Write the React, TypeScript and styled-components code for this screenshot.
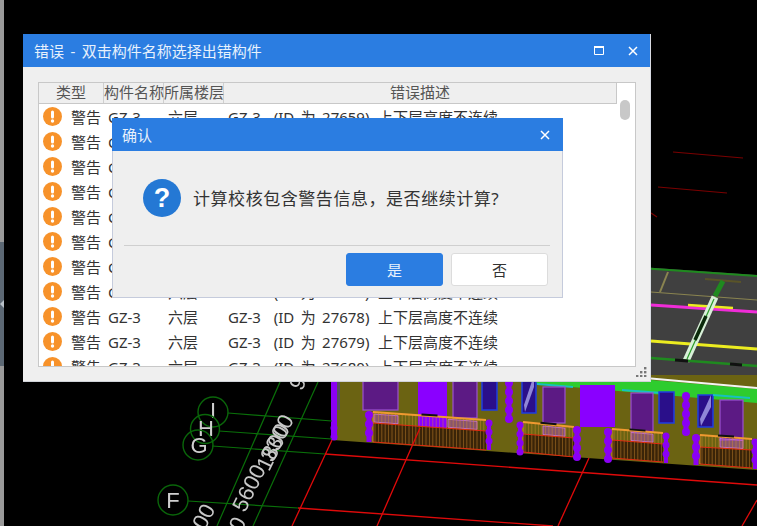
import React from "react";
import styled, { createGlobalStyle } from "styled-components";

const Global = createGlobalStyle`
  html, body { margin: 0; padding: 0; background: #000; }
  * { box-sizing: border-box; }
`;

const FONT = `"Noto Sans", "Noto Sans CJK SC", sans-serif`;
const BLUE = "#2b7de1";

const Desktop = styled.div`
  position: relative;
  width: 757px;
  height: 526px;
  overflow: hidden;
  background: #000;
  display: flex;
  font-family: ${FONT};
`;
const EdgeBar = styled.div`
  width: 4px;
  height: 100%;
  display: flex;
  flex-direction: column;
  background: #9a9a9a;
`;
const EdgeSpacer = styled.div<{ $h: number }>`
  height: ${(p) => p.$h}px;
`;
const EdgeHandle = styled.div`
  height: 124px;
  background: #5c6874;
  display: flex;
  align-items: center;
  justify-content: flex-start;
  color: #b8c0c8;
`;
const Scene = styled.svg`
  position: absolute;
  inset: 0;
  filter: blur(0.35px);
`;
const Window = styled.section`
  position: absolute;
  left: 23px;
  top: 34px;
  width: 628px;
  height: 348px;
  background: #efefef;
  border-right: 1px solid #d8dbe2;
  border-bottom: 1px solid #cfd2d8;
  display: flex;
  flex-direction: column;
`;
const TitleBar = styled.header`
  height: 33px;
  flex: none;
  background: ${BLUE};
  color: #e8f1fc;
  display: flex;
  align-items: center;
  font-size: 15px;
  word-spacing: 2.5px;
`;
const TitleText = styled.span`
  flex: 1;
  padding-left: 11px;
  white-space: nowrap;
`;
const WinButtons = styled.div`
  display: flex;
  align-items: center;
  gap: 24px;
  padding-right: 12px;
`;
const WindowBody = styled.div`
  flex: 1;
  padding: 15px 15px 14px 15px;
  position: relative;
`;
const Table = styled.div`
  width: 598px;
  height: 285px;
  border: 1px solid #c8c8c8;
  background: #fff;
  display: flex;
  overflow: hidden;
`;
const TableMain = styled.div`
  width: 578px;
  flex: none;
  display: flex;
  flex-direction: column;
`;
const Header = styled.div`
  display: flex;
  height: 21px;
  flex: none;
  background: #efefef;
  border-bottom: 1px solid #c8c8c8;
  border-right: 1px solid #c8c8c8;
  color: #555;
  font-size: 15px;
  line-height: 19px;
`;
const HeadCell = styled.div<{ $w: number }>`
  width: ${(p) => p.$w}px;
  flex: ${(p) => (p.$w ? "none" : 1)};
  text-align: center;
  white-space: nowrap;
  border-right: 1px solid #cfcfcf;
  &:last-child { border-right: 0; }
`;
const Rows = styled.div`
  flex: 1;
  overflow: hidden;
`;
const Row = styled.div`
  height: 25px;
  display: flex;
  align-items: center;
  color: #333;
  font-size: 15px;
  white-space: pre;
`;
const IconCell = styled.div`
  width: 32px;
  flex: none;
  padding-left: 4px;
  display: flex;
  align-items: center;
`;
const Cell = styled.div<{ $w: number }>`
  width: ${(p) => p.$w}px;
  flex: none;
`;
const IdCell = styled(Cell)`
  word-spacing: 2.5px;
`;
const ScrollTrack = styled.div`
  flex: 1;
  padding: 17px 4px 0 3px;
`;
const Thumb = styled.div`
  width: 10px;
  height: 20px;
  border-radius: 5px;
  background: #c8c8c8;
`;
const Grip = styled.svg`
  position: absolute;
  right: 3px;
  bottom: 4px;
`;
const Dialog = styled.section`
  position: absolute;
  left: 112px;
  top: 118px;
  width: 451px;
  height: 180px;
  background: #efefef;
  border: 1px solid #c5cbdc;
  border-top: 0;
  display: flex;
  flex-direction: column;
`;
const DialogTitle = styled(TitleBar)`
  margin: 0 -1px;
`;
const DialogTitleText = styled(TitleText)`
  padding-left: 10px;
`;
const DialogClose = styled.div`
  padding-right: 13px;
  display: flex;
`;
const Message = styled.div`
  height: 95px;
  flex: none;
  display: flex;
  align-items: center;
  gap: 12px;
  border-bottom: 1px solid #cfcfcf;
  margin: 0 12px 0 11px;
  padding-left: 19px;
`;
const Question = styled.div`
  width: 38px;
  height: 38px;
  border-radius: 50%;
  background: #2478d4;
  color: #fff;
  font: bold 27px/38px "Liberation Sans", sans-serif;
  text-align: center;
  flex: none;
`;
const MessageText = styled.span`
  font-size: 17px;
  letter-spacing: 0.55px;
  color: #333;
  white-space: nowrap;
  margin-top: -2px;
`;
const Actions = styled.div`
  flex: 1;
  display: flex;
  justify-content: flex-end;
  gap: 8px;
  padding: 7px 14px 0 0;
`;
const Btn = styled.button<{ $primary?: boolean }>`
  width: 97px;
  height: 33px;
  padding: 0;
  border-radius: 3px;
  font: 15px ${FONT};
  border: 1px solid ${(p) => (p.$primary ? BLUE : "#dcdcdc")};
  background: ${(p) => (p.$primary ? BLUE : "#fff")};
  color: ${(p) => (p.$primary ? "#e8f1fc" : "#333")};
`;

const CloseIcon = () => (
  <svg width="10" height="10" viewBox="0 0 10 10">
    <path d="M1 1l8 8M9 1l-8 8" stroke="#fff" strokeWidth="1.5" fill="none" />
  </svg>
);
const MaxIcon = () => (
  <svg width="10" height="9" viewBox="0 0 10 9">
    <path d="M.5 1h9v7.5h-9z" stroke="#fff" strokeWidth="1" fill="none" />
    <path d="M0 1h10" stroke="#fff" strokeWidth="2" />
  </svg>
);
const WarnIcon = () => (
  <svg width="19" height="19" viewBox="0 0 19 19">
    <circle cx="9.5" cy="9.5" r="9.5" fill="#f7922a" />
    <rect x="8" y="3.6" width="3" height="8" rx="1.5" fill="#fff" />
    <circle cx="9.5" cy="14" r="1.7" fill="#fff" />
  </svg>
);

const rows = [27659, 27660, 27661, 27662, 27663, 27664, 27665, 27677, 27678, 27679, 27680];

type P = [number, number];
const pts = (a: P[]) => a.map((p) => p.join(",")).join(" ");

const Blob = ({ x, y1, y2, w }: { x: number; y1: number; y2: number; w: number }) => {
  const cs: number[] = [];
  for (let y = y1 + 3; y < y2; y += 9) cs.push(y);
  return (
    <g fill="#8a00f5">
      <rect x={x - w / 2 + 1} y={y1} width={w - 2} height={y2 - y1} />
      {cs.map((y) => (
        <circle key={y} cx={x} cy={y} r={w / 2 + 0.5} />
      ))}
    </g>
  );
};

const Balcony = ({ x1, x2, t1, t2, m1, m2, b1, b2, pink }: { x1: number; x2: number; t1: number; t2: number; m1: number; m2: number; b1: number; b2: number; pink: [number, number][] }) => {
  const lerp = (a: number, b: number, x: number) => a + ((b - a) * (x - x1)) / (x2 - x1);
  const bars: number[] = [];
  for (let x = x1 + 2; x < x2; x += 3.4) bars.push(x);
  return (
    <g>
      <polygon points={pts([[x1, m1], [x2, m2], [x2, b2], [x1, b1]])} fill="#3a2408" />
      {pink.map(([a, b]) => (
        <polygon key={a} points={pts([[a, lerp(t1, t2, a) + 2], [b, lerp(t1, t2, b) + 2], [b, lerp(m1, m2, b) - 1], [a, lerp(m1, m2, a) - 1]])} fill="#a848c8" fillOpacity="0.5" stroke="#d070e8" strokeWidth="0.8" />
      ))}
      {bars.map((x) => (
        <line key={x} x1={x} x2={x} y1={lerp(t1, t2, x)} y2={lerp(b1, b2, x)} stroke="#d89030" strokeWidth="0.7" opacity="0.65" />
      ))}
      <line x1={x1} y1={t1} x2={x2} y2={t2} stroke="#f09a30" strokeWidth="2" />
      <line x1={x1} y1={m1} x2={x2} y2={m2} stroke="#e02a10" strokeWidth="1" />
      <line x1={x1} y1={b1} x2={x2} y2={b2} stroke="#e02a10" strokeWidth="1" />
      <line x1={x1} y1={t1} x2={x1} y2={b1} stroke="#f09a30" strokeWidth="0.8" />
      <line x1={(x1 + x2) / 2 - 8} y1={lerp(t1, t2, (x1 + x2) / 2 - 8) - 1} x2={(x1 + x2) / 2 + 8} y2={lerp(t1, t2, (x1 + x2) / 2 + 8) - 1} stroke="#111" strokeWidth="2" />
    </g>
  );
};

const PurpleWin = ({ x, w, y, h }: { x: number; w: number; y: number; h: number }) => (
  <rect x={x} y={y} width={w} height={h} fill="#5c1a84" stroke="#9a50d0" strokeWidth="1.2" />
);
const BlueWin = ({ x, w, y, h, glare }: { x: number; w: number; y: number; h: number; glare?: boolean }) => (
  <g>
    <rect x={x} y={y} width={w} height={h} fill="#2a0f8a" stroke="#1f3fe0" strokeWidth="1.5" />
    {glare && <polygon points={pts([[x + 2, y + h - 8], [x + w - 2, y], [x + w - 2, y + 12], [x + 3, y + h - 1]])} fill="#8f86d8" />}
  </g>
);

const Axis = ({ cx, cy, r, label, tx, ty }: { cx: number; cy: number; r: number; label: string; tx: number; ty: number }) => (
  <g>
    <circle cx={cx} cy={cy} r={r} fill="none" stroke="#0a660a" strokeWidth="1.4" />
    <text x={tx} y={ty} fill="#cfcfcf" fontSize="22" textAnchor="middle" fontFamily="Liberation Sans, sans-serif">{label}</text>
  </g>
);

const Dim = ({ x, y, t }: { x: number; y: number; t: string }) => (
  <text x={x} y={y} transform={`rotate(-64 ${x} ${y})`} fill="#c8c8c8" fontSize="22" textAnchor="middle" dominantBaseline="central" fontFamily="Liberation Sans, sans-serif">{t}</text>
);

const CadScene = () => (
  <Scene width="757" height="526" viewBox="0 0 757 526">
    {/* roof */}
    <polygon points={pts([[640, 267], [757, 275], [757, 390], [640, 380]])} fill="#404040" />
    <line x1="640" y1="268" x2="757" y2="276" stroke="#1f8a1f" strokeWidth="2" />
    <line x1="651" y1="292" x2="757" y2="300" stroke="#8a8450" strokeWidth="1.2" />
    <polyline points="668,272 660,292" fill="none" stroke="#8a8450" strokeWidth="2" />
    <line x1="705" y1="279" x2="741" y2="282" stroke="#5a5428" strokeWidth="2" />
    <line x1="723" y1="281" x2="715" y2="296" stroke="#1f8a1f" strokeWidth="5" />
    <line x1="651" y1="305" x2="757" y2="312" stroke="#f02cd8" strokeWidth="3" />
    <line x1="651" y1="341" x2="757" y2="349" stroke="#ecec20" strokeWidth="3" />
    <line x1="688" y1="305" x2="733" y2="308" stroke="#ecec20" strokeWidth="2.4" />
    <line x1="715" y1="297" x2="686" y2="361" stroke="#d8f0d8" strokeWidth="7" />
    <line x1="714" y1="299" x2="687" y2="359" stroke="#2a9a2a" strokeWidth="1.2" />
    <line x1="706" y1="316" x2="695" y2="340" stroke="#0a2a0a" strokeWidth="3.5" />
    <line x1="651" y1="358" x2="757" y2="366" stroke="#1f8a1f" strokeWidth="2.5" />
    <line x1="675" y1="360" x2="688" y2="361" stroke="#111" strokeWidth="3" />
    <line x1="730" y1="364" x2="742" y2="365" stroke="#111" strokeWidth="3" />
    {/* facade */}
    <polygon points={pts([[332, 375], [757, 375], [757, 470], [332, 440]])} fill="#6b6312" />
    <polygon points={pts([[530, 378], [651, 380], [757, 389], [757, 403], [537, 384]])} fill="#2ecc2e" />
    <line x1="651" y1="378.5" x2="757" y2="388" stroke="#f4f4f4" strokeWidth="2" />
    <rect x="331" y="375" width="6" height="65" fill="#8a00f5" />
    <rect x="337" y="380" width="3" height="30" fill="#55505a" />
    <PurpleWin x={363} w={35} y={375} h={35} />
    <rect x="418" y="375" width="29" height="53" fill="#8a00ff" />
    <PurpleWin x={453} w={24} y={375} h={43} />
    <BlueWin x={482} w={15} y={375} h={35} />
    <Blob x={509} y1={380} y2={420} w={7} />
    <BlueWin x={522} w={14} y={375} h={38} glare />
    <polygon points={pts([[537, 383], [573, 386], [573, 388], [537, 385]])} fill="#18c0c0" />
    <PurpleWin x={543} w={22} y={387} h={36} />
    <rect x="580" y="385" width="35" height="42" fill="#8a00ff" />
    <polygon points={pts([[622, 389], [662, 392], [662, 394], [622, 391]])} fill="#18c0c0" />
    <PurpleWin x={631} w={22} y={393} h={39} />
    <BlueWin x={659} w={15} y={392} h={31} />
    <Blob x={686} y1={393} y2={433} w={7} />
    <BlueWin x={698} w={15} y={395} h={32} glare />
    <polygon points={pts([[713, 394], [750, 397], [750, 399], [713, 396]])} fill="#18c0c0" />
    <PurpleWin x={720} w={23} y={400} h={40} />
    <Balcony x1={373} x2={486} t1={412} t2={420} m1={423} m2={431} b1={442} b2={450} pink={[[374, 398], [448, 477]]} />
    <Balcony x1={523} x2={574} t1={422} t2={427} m1={434} m2={438} b1={452} b2={457} pink={[[543, 565]]} />
    <Balcony x1={612} x2={663} t1={429} t2={433} m1={440} m2={444} b1={458} b2={462} pink={[[631, 653]]} />
    <Balcony x1={700} x2={752} t1={435} t2={439} m1={447} m2={450} b1={464} b2={468} pink={[[720, 743]]} />
    <Blob x={369} y1={412} y2={442} w={7} />
    <Blob x={489} y1={420} y2={450} w={6} />
    <Blob x={520} y1={422} y2={453} w={6} />
    <Blob x={577} y1={427} y2={458} w={7} />
    <Blob x={608} y1={429} y2={460} w={7} />
    <Blob x={666} y1={433} y2={463} w={6} />
    <Blob x={696} y1={435} y2={465} w={7} />
    <Blob x={755} y1={439} y2={469} w={6} />
    <Blob x={334} y1={425} y2={440} w={6} />
    {/* grid */}
    <g stroke="#e00a0a" strokeWidth="1.3" fill="none">
      <line x1="325" y1="454" x2="757" y2="485" />
      <line x1="298" y1="508" x2="553" y2="526" />
      <line x1="332" y1="440" x2="292" y2="526" />
      <line x1="420" y1="428" x2="377" y2="526" />
      <line x1="589" y1="458" x2="558" y2="526" />
      <line x1="757" y1="500" x2="742" y2="526" />
    </g>
    <g stroke="#7a0000" strokeWidth="1.2">
      <line x1="673" y1="152" x2="743" y2="158" />
      <line x1="658" y1="187" x2="727" y2="193" />
      <line x1="651" y1="213" x2="657" y2="217" />
    </g>
    <g stroke="#0a700a" strokeWidth="1.2">
      <line x1="228" y1="413" x2="332" y2="421" />
      <line x1="219" y1="431" x2="332" y2="439" />
      <line x1="212" y1="446" x2="325" y2="454" />
      <line x1="188" y1="501" x2="298" y2="508" />
      <line x1="280" y1="382" x2="217" y2="526" />
      <line x1="318" y1="382" x2="253" y2="526" />
    </g>
    <Axis cx={213} cy={412} r={15} label="I" tx={213} ty={418} />
    <Axis cx={205} cy={429} r={14.5} label="H" tx={206} ty={436} />
    <Axis cx={198} cy={445} r={15} label="G" tx={199} ty={453} />
    <Axis cx={173} cy={500} r={15} label="F" tx={173} ty={508} />
    <Dim x={249} y={488} t="5600" />
    <Dim x={277} y={438} t="3300" />
    <Dim x={273} y={447} t="1800" />
    <Dim x={303} y={372} t="900" />
    <Dim x={201} y={522} t="900" />
    <Dim x={232} y={535} t="900" />
  </Scene>
);

export default function App() {
  return (
    <>
      <Global />
      <Desktop>
        <EdgeBar>
          <EdgeSpacer $h={242} />
          <EdgeHandle>
            <svg width="4" height="8" viewBox="0 0 4 8"><path d="M4 0v8L0 4z" fill="#b8c0c8" /></svg>
          </EdgeHandle>
        </EdgeBar>
        <CadScene />
        <Window>
          <TitleBar>
            <TitleText>错误 - 双击构件名称选择出错构件</TitleText>
            <WinButtons>
              <MaxIcon />
              <CloseIcon />
            </WinButtons>
          </TitleBar>
          <WindowBody>
            <Table>
              <TableMain>
                <Header>
                  <HeadCell $w={65}>类型</HeadCell>
                  <HeadCell $w={60}>构件名称</HeadCell>
                  <HeadCell $w={60}>所属楼层</HeadCell>
                  <HeadCell $w={0}>错误描述</HeadCell>
                </Header>
                <Rows>
                  {rows.map((id) => (
                    <Row key={id}>
                      <IconCell><WarnIcon /></IconCell>
                      <Cell $w={37}>警告</Cell>
                      <Cell $w={60}>GZ-3</Cell>
                      <Cell $w={60}>六层</Cell>
                      <IdCell $w={150}>{`GZ-3  (ID 为 ${id})`}</IdCell>
                      <Cell $w={130}>上下层高度不连续</Cell>
                    </Row>
                  ))}
                </Rows>
              </TableMain>
              <ScrollTrack><Thumb /></ScrollTrack>
            </Table>
            <Grip width="11" height="10" viewBox="0 0 11 10" fill="#777">
              <rect x="8" y="0" width="2.4" height="2.4" />
              <rect x="4" y="4" width="2.4" height="2.4" />
              <rect x="8" y="4" width="2.4" height="2.4" />
              <rect x="0" y="8" width="2.4" height="2.4" />
              <rect x="4" y="8" width="2.4" height="2.4" />
              <rect x="8" y="8" width="2.4" height="2.4" />
            </Grip>
          </WindowBody>
        </Window>
        <Dialog>
          <DialogTitle>
            <DialogTitleText>确认</DialogTitleText>
            <DialogClose><CloseIcon /></DialogClose>
          </DialogTitle>
          <Message>
            <Question>?</Question>
            <MessageText>计算校核包含警告信息，是否继续计算?</MessageText>
          </Message>
          <Actions>
            <Btn $primary>是</Btn>
            <Btn>否</Btn>
          </Actions>
        </Dialog>
      </Desktop>
    </>
  );
}
